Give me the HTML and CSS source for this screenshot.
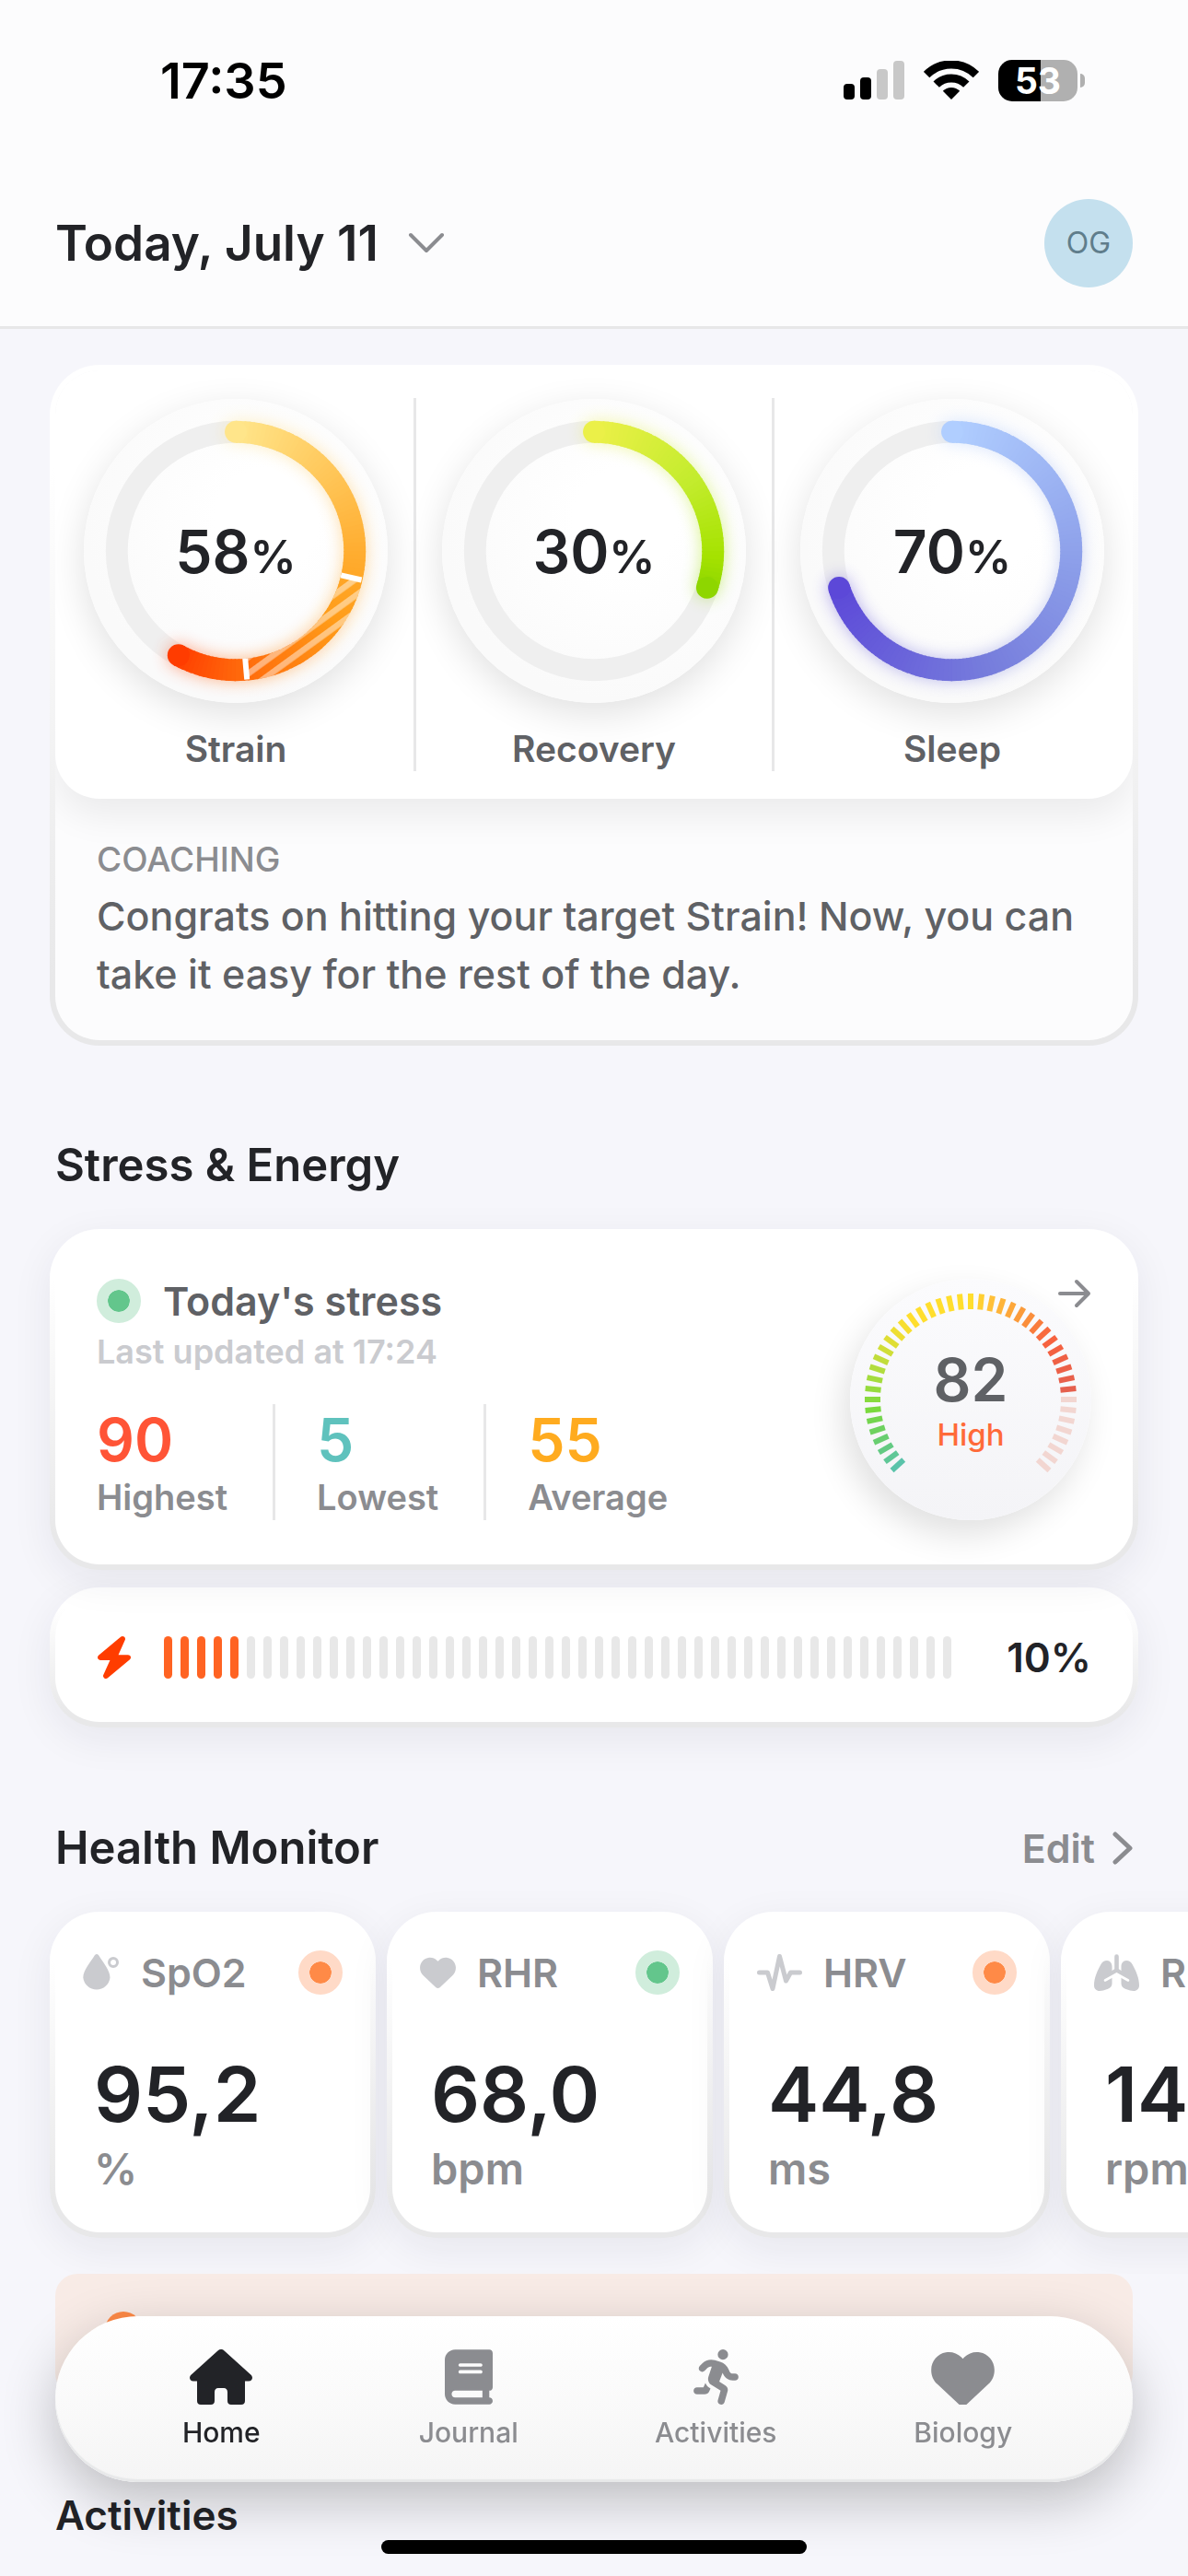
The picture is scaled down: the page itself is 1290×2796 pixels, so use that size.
FILE: index.html
```html
<!DOCTYPE html>
<html lang="en">
<head>
  <meta charset="UTF-8">
  <title>Today</title>
  <meta name="viewport" content="width=device-width, initial-scale=1.0">
  <link rel="stylesheet" href="styles.css">
</head>
<body>
  <header>
    <div class="status-bar">
      <span class="time">17:35</span>
      <div class="status-icons">
        <svg width="66" height="42" viewBox="0 0 66 42">
          <rect x="0" y="25" width="12" height="17" rx="4"/>
          <rect x="18" y="18" width="12" height="24" rx="4"/>
          <rect x="36" y="9" width="12" height="33" rx="4" fill="#c8c8c8"/>
          <rect x="54" y="0" width="12" height="42" rx="4" fill="#c8c8c8"/>
        </svg>
        <svg width="60" height="43" viewBox="0 0 60 43">
          <path d="M3.1 15.1A38 38 0 0 1 56.9 15.1M13.7 25.7A23 23 0 0 1 46.3 25.7" fill="none" stroke="#000" stroke-width="9"/>
          <path d="M30 42L20.8 32.8A13 13 0 0 1 39.2 32.8Z"/>
        </svg>
        <div class="battery"><span>53</span></div>
      </div>
    </div>
    <div class="title-bar">
      <button class="day-picker">
        Today, July 11
        <svg width="40" height="24" viewBox="0 0 40 24"><path d="M3 3L20 20L37 3"/></svg>
      </button>
      <a class="avatar" href="#">OG</a>
    </div>
  </header>

  <main>
    <section class="card summary">
      <div class="rings">
        <div class="ring-col">
          <div class="ring"><svg id="strain" viewBox="0 0 332 332"></svg><p>58<small>%</small></p></div>
          <h3>Strain</h3>
        </div>
        <div class="ring-col">
          <div class="ring"><svg id="recovery" viewBox="0 0 332 332"></svg><p>30<small>%</small></p></div>
          <h3>Recovery</h3>
        </div>
        <div class="ring-col">
          <div class="ring"><svg id="sleep" viewBox="0 0 332 332"></svg><p>70<small>%</small></p></div>
          <h3>Sleep</h3>
        </div>
      </div>
      <div class="coaching">
        <h4>COACHING</h4>
        <p>Congrats on hitting your target Strain! Now, you can take it easy for the rest of the day.</p>
      </div>
    </section>

    <h2>Stress &amp; Energy</h2>
    <section class="card stress">
      <div class="stress-info">
        <div class="stress-title"><i class="dot green"></i><h3>Today's stress</h3></div>
        <p class="updated">Last updated at 17:24</p>
        <div class="stats">
          <div class="stat"><b class="red">90</b><span>Highest</span></div>
          <div class="stat"><b class="teal">5</b><span>Lowest</span></div>
          <div class="stat"><b class="amber">55</b><span>Average</span></div>
        </div>
      </div>
      <div class="gauge">
        <svg id="gauge" viewBox="0 0 262 262"></svg>
        <b>82</b>
        <span>High</span>
      </div>
      <a class="more" href="#" aria-label="Stress details">
        <svg width="36" height="32" viewBox="0 0 36 32"><path d="M2 16H33M20 3L33 16L20 29"/></svg>
      </a>
    </section>
    <section class="card energy">
      <svg class="bolt" width="36" height="46" viewBox="32 0 384 512" preserveAspectRatio="none"><path d="M349.4 44.6c5.9-13.7 1.5-29.7-10.6-38.5s-28.6-8-39.9 1.8l-256 224C33 240.7 29.5 254.6 34 266.7S51.1 288 64 288h111.5L98.6 467.4c-5.9 13.7-1.5 29.7 10.6 38.5s28.6 8 39.9-1.8l256-224c10-8.8 13.6-22.9 8.9-35.3S397.4 224 384 224H272.5L349.4 44.6z"/></svg>
      <div class="bars" id="bars"></div>
      <b>10%</b>
    </section>

    <div class="section-head">
      <h2>Health Monitor</h2>
      <a href="#">Edit <svg width="22" height="36" viewBox="0 0 22 36"><path d="M3 3L19 18L3 33"/></svg></a>
    </div>
    <div class="metrics">
      <article class="card metric">
        <div class="metric-head">
          <svg width="40" height="40" viewBox="0 0 40 40">
            <path d="M15 0C16.500 0 17 1 17.600 2C22 9 29.500 17.500 29.500 25.500A14.700 14.700 0 0 1 .3 25.500C.3 17.500 8 9 12.400 2C13 1 13.500 0 15 0Z"/>
            <circle cx="33" cy="9" r="4.500" fill="none" stroke="#cacbcf" stroke-width="3"/>
          </svg>
          <h3>SpO2</h3><i class="dot orange"></i>
        </div>
        <p class="value">95,2</p><p class="unit">%</p>
      </article>
      <article class="card metric">
        <div class="metric-head">
          <svg width="39" height="34" viewBox="0 32 512 448"><path d="M47.600 300.400L228.300 469.100c7.500 7 17.400 10.900 27.700 10.900s20.200-3.900 27.700-10.900L464.400 300.400c30.400-28.300 47.600-68 47.600-109.500v-5.800c0-69.900-50.500-129.500-119.400-141C347 36.500 300.600 51.400 268 84L256 96 244 84c-32.600-32.600-79-47.500-124.600-39.900C50.500 55.600 0 115.200 0 185.100v5.800c0 41.500 17.200 81.200 47.600 109.500z"/></svg>
          <h3>RHR</h3><i class="dot green"></i>
        </div>
        <p class="value">68,0</p><p class="unit">bpm</p>
      </article>
      <article class="card metric">
        <div class="metric-head">
          <svg width="49" height="40" viewBox="0 0 49 40"><path d="M2.500 20H11.500L17 37.500L24.500 2.500L31.500 29L36.500 20H46.500" fill="none" stroke="#cacbcf" stroke-width="5" stroke-linecap="round" stroke-linejoin="round"/></svg>
          <h3>HRV</h3><i class="dot orange"></i>
        </div>
        <p class="value">44,8</p><p class="unit">ms</p>
      </article>
      <article class="card metric">
        <div class="metric-head">
          <svg width="49" height="40" viewBox="0 0 49 40">
            <path d="M14 7C17.500 7 19.500 10 19.500 13.500V32C19.500 35 17.500 37 14.500 38C11 39.200 8.500 40 6 40C2.500 40 0 37.500 0 34C0 26 3.500 18 7.500 11C9 8.500 11 7 14 7Z"/>
            <path d="M35 7C31.500 7 29.500 10 29.500 13.500V32C29.500 35 31.500 37 34.500 38C38 39.200 40.500 40 43 40C46.500 40 49 37.500 49 34C49 26 45.500 18 41.500 11C40 8.500 38 7 35 7Z"/>
            <path d="M24.500 2.500V17.500L17 22.500M24.500 17.500L32 22.500" fill="none" stroke="#cacbcf" stroke-width="4.600" stroke-linecap="round"/>
            <path d="M12 28.500L24.500 21.500L37 28.500" fill="none" stroke="#fff" stroke-width="2.600" stroke-linecap="round"/>
          </svg>
          <h3>RR</h3><i class="dot green"></i>
        </div>
        <p class="value">14,5</p><p class="unit">rpm</p>
      </article>
    </div>
    <div class="banner"><i></i></div>

    <h2 class="small">Activities</h2>
  </main>

  <nav>
    <a class="active" href="#">
      <svg width="68" height="60" viewBox="0 0 68 60"><path d="M30.500 1.500C32.600 -.4 35.400 -.4 37.500 1.500L66.300 27.500C69.500 30.600 67.800 34.500 64 34.500H60V56C60 58.500 58.500 60 56 60H45C42.500 60 41 58.500 41 56V46.500C41 43.500 39.500 42 37 42H31C28.500 42 27 43.500 27 46.500V56C27 58.500 25.500 60 23 60H12C9.500 60 8 58.500 8 56V34.500H4C.2 34.500-1.500 30.600 1.700 27.500Z"/></svg>
      Home
    </a>
    <a href="#">
      <svg width="52" height="60" viewBox="0 0 448 512"><path d="M96 0C43 0 0 43 0 96V416c0 53 43 96 96 96H384h32c17.700 0 32-14.300 32-32s-14.300-32-32-32V384c17.700 0 32-14.300 32-32V32c0-17.700-14.300-32-32-32H384 96zm0 384H352v64H96c-17.700 0-32-14.300-32-32s14.300-32 32-32zm32-240c0-8.800 7.200-16 16-16H336c8.800 0 16 7.200 16 16s-7.200 16-16 16H144c-8.800 0-16-7.200-16-16zm16 48H336c8.800 0 16 7.200 16 16s-7.200 16-16 16H144c-8.800 0-16-7.200-16-16s7.200-16 16-16z"/></svg>
      Journal
    </a>
    <a href="#">
      <svg width="49" height="60" viewBox="0 0 416 512"><path d="M320 48a48 48 0 1 0 -96 0 48 48 0 1 0 96 0zM125.700 175.500c9.900-9.900 23.400-15.500 37.500-15.500c1.900 0 3.800 .1 5.600 .3L137.600 254c-9.300 28 1.700 58.800 26.800 74.500l86.200 53.900-25.400 88.800c-4.900 17 5 34.700 22 39.600s34.700-5 39.600-22l28.700-100.400c5.900-20.600-2.600-42.600-20.700-53.900L238 299l30.900-82.400 5.100 12.300C289 264.700 323.900 288 362.700 288l21.300 0c17.700 0 32-14.300 32-32s-14.300-32-32-32l-21.300 0c-12.900 0-24.600-7.800-29.500-19.700l-6.300-15c-14.600-35.100-44.100-61.900-80.500-73.100l-48.700-15c-11.100-3.400-22.700-5.200-34.400-5.200c-31 0-60.800 12.300-82.700 34.300L57.400 153.400c-12.500 12.500-12.500 32.800 0 45.300s32.800 12.500 45.300 0l23.100-23.100zM91.200 352L32 352c-17.700 0-32 14.300-32 32s14.300 32 32 32l69.600 0c19 0 36.200-11.200 43.900-28.500L157 361.600l-9.500-6c-17.500-10.900-30.500-26.800-37.900-44.900L91.200 352z"/></svg>
      Activities
    </a>
    <a href="#">
      <svg width="69" height="60" viewBox="0 20 512 448"><path d="M47.600 300.400L228.300 469.100c7.500 7 17.400 10.900 27.700 10.900s20.200-3.900 27.700-10.900L464.400 300.400c30.400-28.300 47.600-68 47.600-109.500v-5.800c0-69.900-50.500-129.500-119.400-141C347 36.500 300.600 51.400 268 84L256 96 244 84c-32.600-32.600-79-47.500-124.600-39.900C50.500 55.600 0 115.200 0 185.100v5.800c0 41.500 17.200 81.200 47.600 109.500z"/></svg>
      Biology
    </a>
  </nav>
  <div class="home-indicator"></div>

  <script>
    // point on a circle, 0 degrees at the top, clockwise
    function point(c, r, deg) {
      const a = (deg - 90) * Math.PI / 180;
      return (c + r * Math.cos(a)).toFixed(2) + " " + (c + r * Math.sin(a)).toFixed(2);
    }

    function arc(c, r, from, to) {
      return `M${point(c, r, from)}A${r} ${r} 0 ${to - from > 180 ? 1 : 0} 1 ${point(c, r, to)}`;
    }

    // stops: [[position, [r, g, b]], ...]
    function mix(stops, t) {
      let i = 1;
      while (i < stops.length - 1 && t > stops[i][0]) i++;
      const [p0, a] = stops[i - 1];
      const [p1, b] = stops[i];
      const k = Math.min(1, Math.max(0, (t - p0) / (p1 - p0)));
      return `rgb(${a.map((v, n) => Math.round(v + (b[n] - v) * k)).join(",")})`;
    }

    function drawRing(id, percent, stops, target) {
      const end = percent * 3.6;
      let strokes = "";
      for (let d = 0; d < end; d += 2) {
        strokes += `<path d="${arc(166, 130, d, Math.min(d + 2.6, end))}" stroke="${mix(stops, d / end)}"/>`;
      }
      const caps = [[0, 0], [end, 1]].map(([d, t]) => {
        const [x, y] = point(166, 130, d).split(" ");
        return `<circle cx="${x}" cy="${y}" r="12" fill="${mix(stops, t)}" stroke="none"/>`;
      }).join("");
      let html = `
        <defs>
          <filter id="${id}-blur" x="-20%" y="-20%" width="140%" height="140%"><feGaussianBlur stdDeviation="9"/></filter>
          <pattern id="${id}-hatch" y="-3" width="14.5" height="14.5" patternUnits="userSpaceOnUse" patternTransform="rotate(-36)">
            <rect width="14.5" height="6.5" fill="#fff" fill-opacity="0.45"/>
          </pattern>
        </defs>
        <circle cx="166" cy="166" r="130" fill="none" stroke="#efefef" stroke-width="24"/>
        <g fill="none" stroke-width="24" filter="url(#${id}-blur)" opacity="0.45">${strokes}${caps}</g>
        <g fill="none" stroke-width="24">${strokes}${caps}</g>`;
      if (target) {
        html += `<path d="${arc(166, 130, target[0], target[1])}" fill="none" stroke="url(#${id}-hatch)" stroke-width="24"/>`;
        target.forEach(d => {
          html += `<path d="M${point(166, 118, d)}L${point(166, 141, d)}" stroke="#fff" stroke-width="6"/>`;
        });
      }
      document.getElementById(id).innerHTML = html;
    }

    drawRing("strain", 58, [[0, [255, 229, 138]], [0.43, [255, 173, 48]], [0.6, [255, 155, 24]], [0.85, [255, 105, 12]], [1, [255, 60, 0]]], [103, 175]);
    drawRing("recovery", 30, [[0, [235, 240, 72]], [0.5, [195, 236, 45]], [0.85, [165, 226, 0]], [1, [142, 214, 0]]]);
    drawRing("sleep", 70, [[0, [176, 206, 255]], [0.4, [138, 156, 232]], [0.65, [118, 124, 220]], [1, [92, 72, 216]]]);

    // stress gauge: 45 ticks, 6 degrees apart
    const gaugeStops = [[-132, [90, 195, 170]], [-114, [104, 206, 112]], [-96, [122, 217, 62]], [-72, [178, 221, 62]], [-48, [238, 222, 50]], [-36, [255, 222, 46]], [0, [255, 222, 46]], [12, [255, 192, 56]], [36, [250, 142, 60]], [51, [248, 98, 62]], [84, [229, 96, 78]]];
    let ticks = "";
    for (let d = -132; d <= 132; d += 6) {
      ticks += `<path d="M${point(131, 98, d)}L${point(131, 115, d)}" stroke="${d > 84 ? "#f2d6d1" : mix(gaugeStops, d)}" stroke-width="6"/>`;
    }
    document.getElementById("gauge").innerHTML = ticks;

    const bars = document.getElementById("bars");
    for (let i = 0; i < 48; i++) {
      const bar = document.createElement("i");
      if (i < 5) bar.className = "on";
      bars.appendChild(bar);
    }
  </script>
</body>
</html>
```

FILE: styles.css
```css
* {
  box-sizing: border-box;
}
body {
  margin: 0;
  font-family: Inter, "Liberation Sans", sans-serif;
  font-weight: 500;
  background: #f6f6fb;
  color: #222327;
}
h2, h3, h4, p {
  margin: 0;
  font-weight: 500;
}
a {
  color: inherit;
  text-decoration: none;
}
button {
  border: none;
  background: none;
  padding: 0;
  font: inherit;
  color: inherit;
}
svg {
  display: block;
  flex: none;
}

/* header */
header {
  background: #fcfcfd;
  border-bottom: 3px solid #e7e7e8;
}
.status-bar {
  height: 174px;
  padding: 0 112px 0 174px;
  display: flex;
  justify-content: space-between;
  align-items: center;
  color: #000;
}
.time {
  font-size: 54px;
  font-weight: 600;
}
.status-icons {
  display: flex;
  align-items: center;
  gap: 21px;
}
.battery {
  position: relative;
  width: 86px;
  height: 45px;
  margin-right: 8px;
  border-radius: 15px;
  background: linear-gradient(90deg, #000 53%, #b0b0b0 53%);
  color: #fff;
  font-size: 39px;
  font-weight: 700;
  line-height: 45px;
  text-align: center;
}
.battery::after {
  content: "";
  position: absolute;
  right: -8px;
  top: 15px;
  width: 5px;
  height: 15px;
  border-radius: 0 5px 5px 0;
  background: #b0b0b0;
}
.title-bar {
  height: 180px;
  padding: 0 60px;
  display: flex;
  justify-content: space-between;
  align-items: center;
}
.day-picker {
  display: flex;
  align-items: center;
  gap: 32px;
  font-size: 53px;
  font-weight: 600;
}
.day-picker path, .more path, .section-head path {
  fill: none;
  stroke: #8b8c90;
  stroke-width: 4;
  stroke-linecap: round;
  stroke-linejoin: round;
}
.avatar {
  width: 96px;
  height: 96px;
  border-radius: 50%;
  background: #c4e0ee;
  color: #5f7d8b;
  font-size: 32px;
  font-weight: 400;
  line-height: 96px;
  text-align: center;
}

main {
  padding: 39px 54px 36px;
}
h2 {
  margin: 100px 6px 39px;
  font-size: 49px;
  font-weight: 600;
  line-height: 60px;
}
h2.small {
  font-size: 44px;
  margin-bottom: 0;
}
.card {
  border: 6px solid transparent;
  border-radius: 54px;
  background: linear-gradient(#fff, #fff) padding-box, linear-gradient(#fff, #fff 15%, #e8e8e9 90%) border-box;
  box-shadow: 0 12px 45px rgba(30, 30, 60, 0.07);
}
.dot {
  flex: none;
  width: 48px;
  height: 48px;
  border: 12px solid;
  border-radius: 50%;
}
.green {
  background: #63c68c;
  border-color: #d0eddc;
  background-clip: padding-box;
}
.orange {
  background: #ff8a47;
  border-color: #ffdac7;
  background-clip: padding-box;
}

/* strain, recovery, sleep */
.summary {
  background: linear-gradient(#fcfcfd, #fcfcfd) padding-box, linear-gradient(#fff, #fff 15%, #e8e8e9 90%) border-box;
  box-shadow: none;
}
.rings {
  display: flex;
  padding: 30px 3px;
  border-radius: 48px;
  background: #fff;
  box-shadow: 0 18px 40px rgba(0, 0, 0, 0.07);
  clip-path: inset(0 0 -100px 0 round 48px 48px 0 0);
}
.ring-col {
  flex: 1;
  display: flex;
  flex-direction: column;
  align-items: center;
  gap: 26px;
  padding-top: 1px;
}
.ring-col + .ring-col {
  border-left: 3px solid #e7e7e8;
}
.ring-col h3 {
  font-size: 39px;
  font-weight: 600;
  line-height: 48px;
  color: #5f6165;
}
.ring {
  display: grid;
  place-items: center;
  width: 330px;
  height: 330px;
  border-radius: 50%;
  background: radial-gradient(circle at 60% 40%, #fff 20%, #fafafa 70%);
  box-shadow: 0 12px 40px rgba(0, 0, 0, 0.12);
}
.ring > * {
  grid-area: 1 / 1;
}
.ring svg {
  width: 330px;
  height: 330px;
}
.ring p {
  font-size: 64px;
  font-weight: 600;
}
.ring small {
  font-size: 50px;
}
.coaching {
  padding: 44px 45px 40px;
}
.coaching h4 {
  margin-bottom: 8px;
  font-size: 37px;
  line-height: 44px;
  color: #8b8c90;
}
.coaching p {
  font-size: 43px;
  line-height: 63px;
  color: #5f6165;
}

/* stress and energy */
.stress {
  position: relative;
  display: flex;
  justify-content: space-between;
  align-items: center;
  padding: 48px 45px;
}
.stress-title {
  display: flex;
  align-items: center;
  gap: 24px;
}
.stress-title h3 {
  font-size: 43px;
  font-weight: 600;
  line-height: 48px;
  color: #5f6165;
}
.updated {
  margin: 11px 0 37px;
  font-size: 36px;
  font-weight: 600;
  line-height: 40px;
  color: #cacbcf;
}
.stats {
  display: flex;
}
.stat {
  display: flex;
  flex-direction: column;
  gap: 4px;
  padding: 3px 49px 3px 45px;
}
.stat:first-child {
  padding-left: 0;
}
.stat + .stat {
  border-left: 3px solid #e7e7e8;
}
.stat b {
  font-size: 64px;
  font-weight: 600;
  line-height: 72px;
}
.stat span {
  font-size: 38px;
  font-weight: 600;
  line-height: 44px;
  color: #8b8c90;
}
.red {
  color: #ff5436;
}
.teal {
  color: #5fc2bd;
}
.amber {
  color: #ffab1f;
}
.gauge {
  position: relative;
  display: flex;
  flex-direction: column;
  align-items: center;
  width: 262px;
  height: 262px;
  padding-top: 74px;
  border-radius: 50%;
  background: linear-gradient(#fbfbfd, #f4f4f7);
  box-shadow: -8px 16px 36px rgba(0, 0, 0, 0.12);
}
.gauge svg {
  position: absolute;
  inset: 0;
}
.gauge b {
  font-size: 64px;
  font-weight: 600;
  line-height: 72px;
  color: #5f6165;
}
.gauge span {
  font-size: 33px;
  line-height: 46px;
  color: #ff6a39;
}
.more {
  position: absolute;
  top: 48px;
  right: 45px;
}
.energy {
  display: flex;
  align-items: center;
  height: 152px;
  margin-top: 19px;
  padding: 0 45px;
}
.bolt {
  margin: 0 36px 0 1px;
  fill: #ff3d00;
}
.bars {
  flex: 1;
  display: flex;
  justify-content: space-between;
}
.bars i {
  width: 9px;
  height: 46px;
  border-radius: 5px;
  background: #e8e8e8;
}
.bars .on {
  background: #ff6322;
}
.energy b {
  width: 152px;
  font-size: 44px;
  font-weight: 600;
  text-align: right;
}

/* health monitor */
.section-head {
  display: flex;
  justify-content: space-between;
  align-items: center;
  margin: 101px 6px 0;
}
.section-head h2 {
  margin: 0;
}
.section-head a {
  display: flex;
  align-items: center;
  gap: 19px;
  font-size: 43px;
  font-weight: 600;
  color: #8b8c90;
}
.section-head path {
  stroke-width: 5;
}
.metrics {
  display: flex;
  gap: 12px;
  margin: 0 -54px;
  padding: 39px 54px;
  overflow-x: auto;
  scrollbar-width: none;
}
.metric {
  flex: none;
  width: 354px;
  padding: 36px 30px 39px;
}
.metric-head {
  display: flex;
  align-items: center;
  gap: 23px;
  margin-bottom: 57px;
  color: #8b8c90;
}
.metric-head svg {
  fill: #cacbcf;
}
.metric-head h3 {
  flex: 1;
  font-size: 43px;
  font-weight: 600;
  line-height: 48px;
}
.value, .unit {
  padding-left: 12px;
}
.value {
  font-size: 83px;
  font-weight: 600;
  line-height: 102px;
}
.unit {
  font-size: 47px;
  font-weight: 600;
  line-height: 60px;
  color: #8b8c90;
}
.banner {
  height: 132px;
  margin: 0 6px;
  padding: 41px 54px;
  border-radius: 24px;
  background: #f8ebe6;
}
.banner i {
  display: block;
  width: 40px;
  height: 40px;
  border-radius: 50%;
  background: #ff8a47;
}

/* bottom navigation */
nav {
  position: fixed;
  left: 60px;
  right: 60px;
  bottom: 102px;
  height: 180px;
  padding: 36px 50px 0 46px;
  display: flex;
  border-radius: 90px;
  background: linear-gradient(#fff, #f5f5f5);
  box-shadow: inset 0 -3px 1px #e7e8e9, 0 20px 60px rgba(0, 0, 0, 0.24);
}
nav a {
  flex: 1;
  display: flex;
  flex-direction: column;
  align-items: center;
  gap: 12px;
  font-size: 30px;
  line-height: 36px;
  color: #8b8c90;
  fill: #8b8c90;
}
nav .active {
  color: #222327;
  fill: #222327;
}
.home-indicator {
  position: fixed;
  left: 50%;
  bottom: 24px;
  width: 462px;
  height: 15px;
  margin-left: -231px;
  border-radius: 8px;
  background: #000;
}
```
